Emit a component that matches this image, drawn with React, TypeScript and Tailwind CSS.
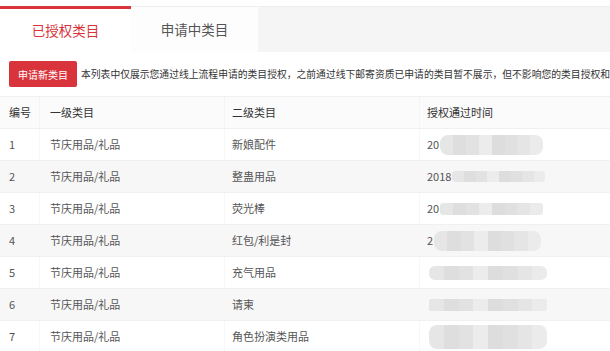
import React from "react";

const rows = [
  { n: "1", a: "节庆用品/礼品", b: "新娘配件", pre: "20", blob: "ml-[1px] w-[103px] h-[20px] rounded-[8px]" },
  { n: "2", a: "节庆用品/礼品", b: "整蛊用品", pre: "2018", blob: "ml-[1px] w-[93px] h-[11px] rounded-[4px]" },
  { n: "3", a: "节庆用品/礼品", b: "荧光棒", pre: "20", blob: "ml-[1px] w-[103px] h-[12px] rounded-[3px]" },
  { n: "4", a: "节庆用品/礼品", b: "红包/利是封", pre: "2", blob: "ml-[1px] w-[107px] h-[20px] rounded-[8px]" },
  { n: "5", a: "节庆用品/礼品", b: "充气用品", pre: "", blob: "ml-[2px] w-[118px] h-[14px] rounded-[6px]" },
  { n: "6", a: "节庆用品/礼品", b: "请柬", pre: "", blob: "ml-[2px] w-[118px] h-[12px] rounded-[2px]" },
  { n: "7", a: "节庆用品/礼品", b: "角色扮演类用品", pre: "", blob: "ml-[2px] w-[118px] h-[24px] rounded-[8px]" },
];

const shades = ["#e6e6e6", "#dedede", "#e2e2e2", "#ececec", "#dddddd", "#e0e0e0", "#e5e5e5", "#ebebeb"];

function Blob({ cls }: { cls: string }) {
  return (
    <div className={`flex overflow-hidden ${cls}`}>
      {shades.map((c, i) => (
        <div key={i} className="flex-1" style={{ background: c }} />
      ))}
    </div>
  );
}

export default function App() {
  return (
    <div
      className="w-[610px] h-[351px] overflow-hidden bg-white text-[#555]"
      style={{ fontFamily: '"Noto Sans CJK SC", "Noto Sans", sans-serif' }}
    >
      {/* Tabs */}
      <div className="pt-[6px]">
        <div className="flex h-[46px] bg-[#f5f5f5] border-t border-[#eeeeee]">
          <div className="w-[131px] -mt-px border-t-[3px] border-[#d9343b] bg-white flex items-center justify-center text-[13.5px] text-[#d9343b]">
            已授权类目
          </div>
          <div className="w-[127px] bg-[#fdfdfd] flex items-center justify-center text-[13.5px] text-[#555]">
            申请中类目
          </div>
        </div>
      </div>

      {/* Action row */}
      <div className="flex items-center h-[44px] pl-[9px]">
        <div className="shrink-0 w-[68px] h-[26px] bg-[#d9343b] rounded-[2px] flex items-center justify-center text-[10px] text-white">
          申请新类目
        </div>
        <div className="ml-[4px] text-[9.8px] text-[#333] whitespace-nowrap overflow-hidden">
          本列表中仅展示您通过线上流程申请的类目授权，之前通过线下邮寄资质已申请的类目暂不展示，但不影响您的类目授权和使用。
        </div>
      </div>

      {/* Table */}
      <div className="border-t border-[#f0f0f0]">
        <div className="grid grid-cols-[40px_185px_195px_1fr] h-[32px] bg-[#fbfbfb] border-b border-[#f0f0f0] text-[11px] text-[#333]">
          <div className="flex items-center pl-[9px] border-r border-[#f4f4f4]">编号</div>
          <div className="flex items-center pl-[10px] border-r border-[#f4f4f4]">一级类目</div>
          <div className="flex items-center pl-[7px] border-r border-[#f4f4f4]">二级类目</div>
          <div className="flex items-center pl-[7px]">授权通过时间</div>
        </div>
        {rows.map((r, i) => (
          <div
            key={r.n}
            className={`grid grid-cols-[40px_185px_195px_1fr] h-[32px] border-b border-[#f0f0f0] text-[11px] ${
              i % 2 === 1 ? "bg-[#f7f7f7]" : "bg-white"
            }`}
          >
            <div className="flex items-center pl-[9px] border-r border-[#f7f7f7]">{r.n}</div>
            <div className="flex items-center pl-[10px] border-r border-[#f7f7f7]">{r.a}</div>
            <div className="flex items-center pl-[7px] border-r border-[#f7f7f7]">{r.b}</div>
            <div className="flex items-center pl-[7px]">
              {r.pre && <span className="text-[#555]">{r.pre}</span>}
              <Blob cls={r.blob} />
            </div>
          </div>
        ))}
      </div>
    </div>
  );
}
